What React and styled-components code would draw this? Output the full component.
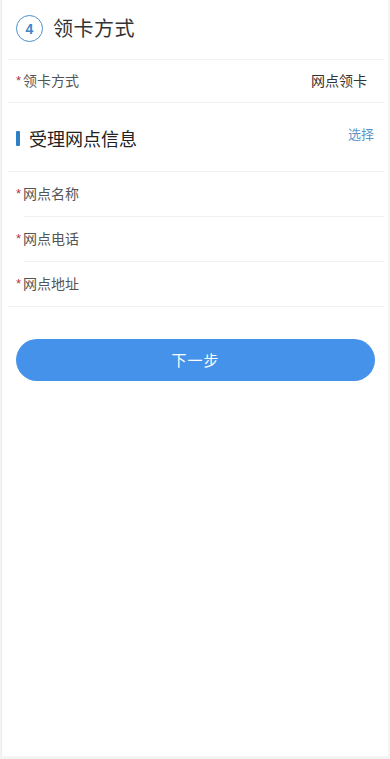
import React from "react";
import styled, { createGlobalStyle } from "styled-components";

const Global = createGlobalStyle`
  html, body { margin: 0; padding: 0; background: #fff; }
  body { font-family: "Noto Sans CJK SC", "Noto Sans", sans-serif; }
  * { box-sizing: border-box; }
`;

const Frame = styled.div`
  height: 759px;
  padding: 0 2px 3px 1px;
  background: #f4f4f4;
  display: flex;
`;

const Page = styled.div`
  flex: 1;
  background: #fff;
  border-left: 1px solid #ececec;
  display: flex;
  flex-direction: column;
  padding: 0 4px 0 6px;
`;

const StepHeader = styled.div`
  display: flex;
  align-items: center;
  gap: 10px;
  height: 60px;
  padding: 0 0 2px 8px;
  border-bottom: 1.5px solid #f3f3f3;
`;

const StepCircle = styled.div`
  width: 27px;
  height: 27px;
  border-radius: 50%;
  border: 1.5px solid #4a8fc9;
  color: #3d86c6;
  font-family: "Liberation Sans", Arial, sans-serif;
  font-weight: bold;
  font-size: 14px;
  display: flex;
  align-items: center;
  justify-content: center;
`;

const StepTitle = styled.div`
  font-size: 20px;
  line-height: 1;
  color: #333;
  letter-spacing: 0.5px;
  margin-bottom: 2px;
`;

const Row = styled.div`
  display: flex;
  align-items: center;
  justify-content: space-between;
  height: ${(p) => p.$h || 45}px;
  padding: 0 17px 3px 8px;
  border-bottom: 1px solid #f2f2f2;
`;

const FieldRow = styled.div`
  height: 45px;
  display: flex;
  align-items: center;
  padding: 0 0 4px 8px;
  position: relative;
  &::after {
    content: "";
    position: absolute;
    left: ${(p) => (p.$full ? 0 : 16)}px;
    right: 0;
    bottom: 0;
    border-bottom: 1px solid #f0f0f0;
  }
`;

const Label = styled.div`
  font-size: 14px;
  line-height: 1;
  color: #555;
  display: flex;
  align-items: center;
`;

const Star = styled.span`
  color: #b3344e;
  font-size: 13px;
  font-family: "Liberation Sans", Arial, sans-serif;
  margin-right: 2px;
  position: relative;
  top: 1px;
`;

const Value = styled.div`
  font-size: 14px;
  line-height: 1;
  color: #333;
`;

const SectionHeader = styled.div`
  display: flex;
  justify-content: space-between;
  align-items: flex-start;
  height: 69px;
  padding: 22px 10px 0 8px;
  border-bottom: 1px solid #f2f2f2;
`;

const SectionTitle = styled.div`
  display: flex;
  align-items: center;
  gap: 9px;
  font-size: 18px;
  line-height: 1;
  color: #222;
  margin-top: 4px;
  &::before {
    content: "";
    width: 4px;
    height: 15px;
    border-radius: 1px;
    background: #2f7fc4;
  }
`;

const Pick = styled.div`
  font-size: 13px;
  line-height: 1;
  color: #5b97c9;
  margin-top: 2px;
`;

const ButtonWrap = styled.div`
  padding: 32px 9px 0 8px;
`;

const NextButton = styled.button`
  width: 100%;
  height: 42px;
  border: none;
  border-radius: 21px;
  background: #4592ea;
  color: #fff;
  font-size: 15px;
  font-family: "Noto Sans CJK SC", sans-serif;
  letter-spacing: 1px;
  padding: 0 0 2px;
`;

export default function App() {
  return (
    <>
      <Global />
      <Frame>
        <Page>
          <StepHeader>
            <StepCircle>4</StepCircle>
            <StepTitle>领卡方式</StepTitle>
          </StepHeader>
          <Row $h={43}>
            <Label>
              <Star>*</Star>领卡方式
            </Label>
            <Value>网点领卡</Value>
          </Row>
          <SectionHeader>
            <SectionTitle>受理网点信息</SectionTitle>
            <Pick>选择</Pick>
          </SectionHeader>
          <FieldRow>
            <Label>
              <Star>*</Star>网点名称
            </Label>
          </FieldRow>
          <FieldRow>
            <Label>
              <Star>*</Star>网点电话
            </Label>
          </FieldRow>
          <FieldRow $full>
            <Label>
              <Star>*</Star>网点地址
            </Label>
          </FieldRow>
          <ButtonWrap>
            <NextButton>下一步</NextButton>
          </ButtonWrap>
        </Page>
      </Frame>
    </>
  );
}
